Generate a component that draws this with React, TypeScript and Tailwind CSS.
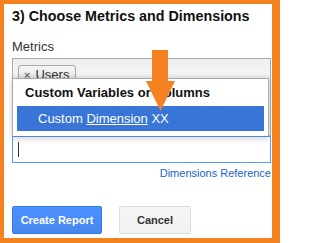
export default function App() {
  const font = { fontFamily: '"Liberation Sans", Arial, sans-serif' };

  return (
    <div
      className="w-[280px] h-[243px] bg-white border-[#f58220] border-l-4 border-t-4 border-r-[8px] border-b-[5px] relative"
      style={font}
    >
      <div className="pl-2 pr-px pt-[3px]">
        <h2 className="text-[14.3px] leading-[18px] font-bold text-[#111]">3) Choose Metrics and Dimensions</h2>

        <div className="mt-[14px] text-[13px] leading-[16px] text-[#333]">Metrics</div>

        {/* chosen field */}
        <div className="relative mt-[3px]">
          <div className="h-[78px] border border-[#aaa] bg-gradient-to-b from-[#eee] via-white to-white pt-[3px] pl-[5px]">
            <span className="inline-flex items-start h-[22px] pt-px pl-[5px] pr-[6px] border border-[#aaa] rounded-[3px] bg-gradient-to-b from-[#f4f4f4] to-[#e6e6e6] text-[13px] leading-[15px] text-[#333]">
              <span className="text-[11px] text-[#777] mr-[5px] mt-px font-bold">×</span>
              Users
            </span>
          </div>
          <div className="h-[27px] border border-[#5897fb] bg-white flex items-center pl-[5px]">
            <span className="w-px h-[15px] bg-[#333]" />
          </div>

          {/* dropdown */}
          <div className="absolute left-0 right-[2px] top-[20px] h-[58px] bg-white border-x border-t border-[#aaa] shadow-[0_-2px_4px_rgba(0,0,0,0.12),0_4px_5px_rgba(0,0,0,0.12)] px-[4px] pt-[6px]">
            <div className="text-[13px] leading-[16px] font-bold text-[#111] pl-[8px]">Custom Variables or Columns</div>
            <div className="mt-[5px] h-[25px] bg-[#3875d7] text-white text-[13px] leading-[25px] pl-[21px]">
              Custom <span className="underline">Dimension</span> XX
            </div>
          </div>
        </div>

        <div className="text-right mt-[3px] text-[11px] leading-[14px] text-[#1a5fc8]">Dimensions Reference</div>

        <div className="flex gap-[17px] mt-[26px]">
          <button className="w-[90px] h-[28px] rounded-[2px] border border-[#3079ed] bg-gradient-to-b from-[#4d90fe] to-[#4787ed] text-white text-[11px] font-bold">
            Create Report
          </button>
          <button className="w-[72px] h-[28px] rounded-[2px] border border-[#dcdcdc] bg-gradient-to-b from-[#f5f5f5] to-[#f1f1f1] text-[#333] text-[11px] font-bold">
            Cancel
          </button>
        </div>
      </div>

      {/* orange arrow annotation */}
      <svg className="absolute left-[142px] top-[46px]" width="29" height="61" viewBox="0 0 29 61">
        <polygon points="6,0 22,0 22,31 29,31 14.5,61 0,31 6,31" fill="#f58220" />
      </svg>
    </div>
  );
}
